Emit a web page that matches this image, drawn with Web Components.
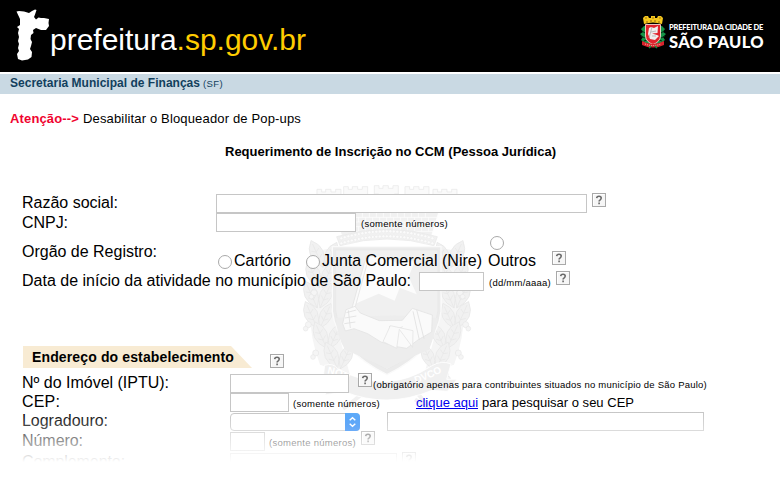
<!DOCTYPE html>
<html lang="pt-BR">
<head>
<meta charset="utf-8">
<title>Requerimento de Inscrição no CCM</title>
<style>
body{margin:0;background:#fff;font-family:"Liberation Sans",Arial,sans-serif;color:#000;width:780px;height:477px;overflow:hidden}
</style>
</head>
<body>
<ccm-page></ccm-page>
<script>
const def=(name,html,after)=>customElements.define(name,class extends HTMLElement{
  connectedCallback(){
    if(this.shadowRoot)return;
    this.attachShadow({mode:"open"}).innerHTML=html;
    if(after)after(this,this.shadowRoot);
  }
});
const place=el=>{
  el.style.marginLeft=(el.getAttribute("gap")||0)+"px";
  el.style.marginTop=(el.getAttribute("drop")||0)+"px";
};

/* One line of text; "w" is its set width, reached through letter-spacing. */
def("ui-text",`<style>:host{display:block;flex:none;white-space:pre;font-size:16px;line-height:20px}span{display:inline-block}</style><span><slot></slot></span>`,(el,root)=>{
  place(el);
  const size=el.getAttribute("size");
  if(size)el.style.fontSize=size+"px";
  const w=+el.getAttribute("w");
  if(w){
    const span=root.querySelector("span");
    const n=el.textContent.length;
    el.style.letterSpacing=((w-span.getBoundingClientRect().width)/n)+"px";
    el.style.width=w+"px";
  }
});
def("ui-field",`<style>:host{display:block;flex:none;box-sizing:border-box;height:19px;border:1px solid #c6c6c6;background:#fff}</style>`,el=>{
  place(el);el.style.width=el.getAttribute("w")+"px";
});
def("ui-radio",`<style>:host{display:block;flex:none;box-sizing:border-box;width:14px;height:14px;border:1px solid #a9a9a9;border-radius:50%;background:#fff}</style>`,place);
def("ui-help",`<style>:host{display:block;flex:none;width:14px;height:14px}svg{display:block}</style>
<svg width="14" height="14" viewBox="0 0 14 14"><rect x=".5" y=".5" width="13" height="13" fill="#f6f6f6" stroke="#a9a9a9"/><path d="M1.500 12.500V1.500H12.500" fill="none" stroke="#fff"/><path d="M4.700 5.100Q4.800 3.200 7 3.200Q9.200 3.200 9.200 5Q9.200 6.100 8.200 6.800Q7.100 7.500 7.100 8.600M7.100 9.600V11.300" fill="none" stroke="#6a6a6a" stroke-width="1.600"/></svg>`,place);
def("ui-select",`<style>:host{display:flex;flex:none;box-sizing:border-box;width:130px;height:18px;border:1px solid #c6c6c6;border-radius:4px;background:#fff;justify-content:flex-end}svg{display:block;margin:-1px}</style>
<svg width="15" height="18" viewBox="0 0 15 18"><defs><linearGradient id="b" x2="0" y2="1"><stop stop-color="#5aa9f9"/><stop offset="1" stop-color="#127af4"/></linearGradient></defs><path d="M0 0H11Q15 0 15 4V14Q15 18 11 18H0Z" fill="url(#b)"/><path d="M4.700 7.300L7.500 4.700L10.300 7.300M4.700 10.700L7.500 13.300L10.300 10.700" fill="none" stroke="#fff" stroke-width="1.400"/></svg>`,place);
def("form-row",`<style>:host{display:flex;align-items:flex-start;padding-left:22px;box-sizing:border-box}</style><slot></slot>`,el=>{el.style.height=el.getAttribute("h")+"px"});
def("section-tab",`<style>:host{display:block;flex:none;box-sizing:border-box;width:229px;height:22px;margin-left:1px;padding:1px 0 0 9px;background:#f8ebd3;clip-path:polygon(0 0,208px 0,100% 100%,0 100%);font-weight:700}</style><slot></slot>`);

/* City crest in full colour, for the black header. */
def("city-crest",`<style>:host{display:block;flex:none;width:26px;height:35px}svg{display:block}</style>
<svg width="26" height="35" viewBox="0 0 26 35">
<path d="M4 9L3 3L5 1H8L9 3H11V1H15V3H17L18 1H21L23 3L22 9Q13 6 4 9Z" fill="#f4c81e"/>
<path d="M5 3H7M12 3H14M19 3H21M7 6V8M11 5V7M15 5V7M19 6V8" stroke="#a77413" stroke-width="1.200"/>
<path d="M4 11L1 14L3 17L0 19L3 22L1 25L5 28L9 31L17 31L21 28L25 25L23 22L26 19L23 17L25 14L22 11Z" fill="#159447"/>
<path d="M2 16L5 18M1 21L5 23M24 16L21 18M25 21L21 23M4 26L7 25M22 26L19 25" stroke="#052c16"/>
<path d="M5.500 9.500H20.500V21Q20 27 13 29.500Q6 27 5.500 21Z" fill="#e0232d" stroke="#f9d8cf" stroke-width=".9"/>
<path d="M9 13L11 12L14 13L18 11L17.500 18L12 18.500L17 20L19 21L15 25L10 24L8 19Z" fill="#f0eeee"/>
<path d="M12 12L9 23M11 17L16 16M12 21L16 21" stroke="#a5a5a6" stroke-width=".7"/>
<path d="M2 26Q13 32 24 26L24 30Q13 35 2 30Z" fill="#d8232d"/><path d="M5 29Q13 32 21 29" fill="none" stroke="#f7c8b6" stroke-width="1" stroke-dasharray="1 1"/>
<path d="M9 33L11 31M17 33L15 31" stroke="#159447" stroke-width="1.500"/>
</svg>`);

def("site-header",`<style>
:host{display:flex;height:72px;background:#000;color:#fff;box-sizing:border-box;align-items:flex-start}
.map{display:block;margin:8px 0 0 15px;flex:none}
.gov{color:#fc0}
city-crest{margin:15px 0 0 auto}
.brand{display:flex;flex-direction:column;margin:23px 17px 0 3px;width:94px;font-family:Lato,"Open Sans",sans-serif;font-weight:900}
</style>
<svg class="map" width="35" height="54" viewBox="0 0 35 54"><path d="M1.500 3.500L4 3L9 3.500L14 5L17 3L20 1.500L21.500 2L20 6.500L19 9L21 11.500L23.500 9.500L26 10L29 10L34 11L33.500 15L34 18L31 22L26 22L21 20L18 22L18.500 25L16 27L15.500 31L17 34L16 38L15 41L17 44L16.500 49L13 51.500L7 52.500L3 51L2 46L4 43L3 40L4 36L3 33L4 29L3 25L4 21L2 19L5 17L5 11Z" fill="#fff"/></svg>
<ui-text drop="30" size="30" w="256">prefeitura<span class="gov">.sp.gov.br</span></ui-text>
<city-crest></city-crest>
<div class="brand"><ui-text size="7.500" w="94" style="line-height:10px">PREFEITURA DA CIDADE DE</ui-text><ui-text size="16.500" w="95" style="line-height:18px">SÃO PAULO</ui-text></div>`);

def("department-bar",`<style>:host{display:flex;height:20px;margin-top:2px;padding-left:10px;background:#c9d9e3;color:#123f5d}b{display:block}</style>
<b><ui-text size="12" w="190" drop="-1">Secretaria Municipal de Finanças</ui-text></b><ui-text size="9.500" w="20" gap="3">(SF)</ui-text>`);

/* Pale coat of arms behind the form; branches are laid out leaf by leaf. */
def("crest-watermark",`<style>:host{display:block;position:absolute;left:295px;top:178px;width:180px;height:236px;pointer-events:none}svg{display:block}</style>
<svg width="180" height="236" viewBox="0 0 540 708" fill="#f1f1f1" stroke="#fff" stroke-width="2.500">
<g id="battlements"></g>
<path d="M118 100L432 100L405 190Q276 150 145 190Z"/>
<g id="bricks" fill="none" stroke-width="2"></g>
<path d="M125 176Q276 132 427 176L417 203Q276 163 135 203Z" stroke="#ebebeb"/>
<g id="beads" fill="#fbfbfb" stroke="#e8e8e8" stroke-width="1.500"></g>
<g id="branches" stroke="#e7e7e7" stroke-width="2"></g>
<path d="M112 206H438V400Q426 515 276 590Q126 515 112 400Z" fill="#ebebeb" stroke="#fafafa" stroke-width="4"/>
<path d="M122 216H429V396Q418 505 276 574Q134 505 122 396Z" fill="#f0f0f0" stroke="#e8e8e8"/>
<path d="M209 242Q260 223 308 258L360 249L341 296L365 349L314 329L299 368L251 347L181 377L203 303Z" fill="#fcfcfc" stroke="none"/>
<path d="M214 233L222 236L151 495L143 492Z" fill="#fafafa" stroke="#e3e3e3"/>
<path d="M150 515Q200 535 276 572Q350 535 402 515Q420 470 429 420Q320 405 122 420Q128 480 150 515Z" fill="#ededed" stroke="none"/>
<path d="M153 395L180 385L196 405L253 428L322 427L352 391L412 411L410 462L370 485L335 511L305 506L258 492L218 467L177 452L151 459L143 437Z" fill="#fafafa" stroke="#e3e3e3"/>
<path d="M154 404L184 396M150 420L184 414M148 437L181 432M160 397L166 450M282 444Q295 463 323 446M354 400L373 486M365 395L387 482" fill="none" stroke="#e0e0e0"/>
<path d="M286 443L264 491L305 511L313 454L353 508L354 458Z" fill="#fafafa" stroke="#e5e5e5"/>
<path d="M175 672L144 692L179 666L215 637M370 649L405 693L360 664" stroke="#f1f1f1" stroke-width="12" fill="none"/>
<path d="M89 562Q113 553 130 573Q273 654 411 563Q440 546 468 558L455 604L486 604L457 640L411 637Q276 693 148 641L90 651L101 621L62 619L85 594Z" fill="#f0f0f0" stroke="#fff"/>
<path id="left" d="M96 586Q140 592 178 624" fill="none" stroke="none"/><path id="right" d="M362 616Q405 602 452 576" fill="none" stroke="none"/>
<g font-family="Liberation Sans,sans-serif" font-size="30" font-weight="700" fill="#fff" stroke="none"><text><textPath href="#left">NON</textPath></text><text><textPath href="#right">DVCO</textPath></text></g>
</svg>`,(el,root)=>{
  const fill=(id,s)=>{root.getElementById(id).innerHTML=s};
  let s="";
  [[66,42],[146,34],[238,31],[330,34],[414,42]].forEach(([x,y])=>{
    s+=`<path d="M${x} ${y}V${y-8}H${x+14}V${y}H${x+26}V${y-8}H${x+42}V${y}H${x+56}V${y-8}H${x+72}V${y+17}H${x+60}V100H${x+13}V${y+17}H${x}Z" stroke="#ebebeb" fill="#fafafa"/>`;
  });
  fill("battlements",s);
  s="";
  for(let r=0;r<4;r++){s+=`<path d="M${124+r*4} ${118+r*14}H${428-r*4}"/>`;for(let i=0;i<13;i++)s+=`<path d="M${139+i*21+(r%2)*10} ${104+r*14}v14"/>`}
  fill("bricks",s);
  s="";
  for(let i=0;i<27;i++){const x=139+i*10.5,d=(i-13)/13,y=160+d*d*21;s+=`<circle cx="${x}" cy="${y}" r="4.500"/><circle cx="${x}" cy="${y+15}" r="4.500"/>`}
  fill("beads",s);
  s="";
  const leaf=(x,y,a,w,h)=>`<g transform="translate(${x} ${y}) rotate(${a})"><path d="M0 0Q${-w} ${-h*.55} 0 ${-h}Q${w} ${-h*.55} 0 0Z" fill="#f1f1f1"/><path d="M0 0V${-h*.87}M0 ${-h*.32}l${-w*.32} -10M0 ${-h*.32}l${w*.32} -10M0 ${-h*.57}l${-w*.3} -8M0 ${-h*.57}l${w*.3} -8" fill="none"/></g>`;
  const half=dir=>{
    let t="";
    const X=v=>dir<0?v:552-v;
    t+=`<path d="M${X(85)} 215Q${X(10)} 390 ${X(75)} 560L${X(165)} 590L${X(112)} 400V210Z" fill="#f5f5f5" stroke="none"/>`;
    for(let i=0;i<6;i++){
      const x=84-Math.sin(i/5*Math.PI)*18+(i>3?(i-3)*22:0),y=268+i*61;
      t+=leaf(X(x),y,dir*24,40,88)+leaf(X(x+8),y,-dir*24,36,82);
    }
    [[57,344],[40,440],[62,525],[101,590]].forEach(([x,y])=>{t+=`<circle cx="${X(x)}" cy="${y}" r="9" fill="#f5f5f5"/><circle cx="${X(x-8)}" cy="${y+12}" r="7" fill="#f5f5f5"/>`});
    return t;
  };
  fill("branches",half(-1)+half(1));
});

def("registration-form",`<style>
:host{display:block}
a{color:#00e;text-decoration:underline}
.note{display:flex;height:36px;padding:15px 0 0 10px;box-sizing:border-box}
.note b{color:#f0032f}
.title{height:63px;padding:12px 0 0 225px;box-sizing:border-box;font-weight:700}
</style>
<div class="note"><b><ui-text size="13" w="69">Atenção--&gt;</ui-text></b><ui-text size="13" w="218" gap="4">Desabilitar o Bloqueador de Pop-ups</ui-text></div>
<div class="title"><ui-text size="13" w="331">Requerimento de Inscrição no CCM (Pessoa Jurídica)</ui-text></div>
<form-row h="20"><ui-text w="96">Razão social:</ui-text><ui-field gap="98" drop="1" w="371"></ui-field><ui-help gap="5"></ui-help></form-row>
<form-row h="19"><ui-text w="46">CNPJ:</ui-text><ui-field gap="148" w="140"></ui-field><ui-text gap="5" drop="1" size="9.500" w="87">(somente números)</ui-text></form-row>
<form-row h="39"><ui-text drop="10" w="135">Orgão de Registro:</ui-text><ui-radio gap="61" drop="23"></ui-radio><ui-text gap="2" drop="19" w="57">Cartório</ui-text><ui-radio gap="15" drop="23"></ui-radio><ui-text gap="2" drop="19" w="160">Junta Comercial (Nire)</ui-text><ui-text gap="6" drop="19" w="48">Outros</ui-text><ui-radio gap="-46" drop="4"></ui-radio><ui-help gap="48" drop="19"></ui-help></form-row>
<form-row h="75"><ui-text w="389">Data de início da atividade no município de São Paulo:</ui-text><ui-field gap="8" drop="1" w="65"></ui-field><ui-text gap="5" drop="2" size="9.500" w="62">(dd/mm/aaaa)</ui-text><ui-help gap="5"></ui-help></form-row>
<form-row h="27"><section-tab><ui-text size="14" w="202">Endereço do estabelecimento</ui-text></section-tab><ui-help gap="18" drop="8"></ui-help></form-row>
<form-row h="20"><ui-text w="147">Nº do Imóvel (IPTU):</ui-text><ui-field gap="61" drop="1" w="119"></ui-field><ui-help gap="9"></ui-help><ui-text gap="1" drop="2" size="9.500" w="334">(obrigatório apenas para contribuintes situados no município de São Paulo)</ui-text></form-row>
<form-row h="19"><ui-text drop="-1" w="38">CEP:</ui-text><ui-field gap="170" w="59"></ui-field><ui-text gap="4" drop="1" size="9.500" w="87">(somente números)</ui-text><ui-text gap="36" drop="0" size="13" w="62"><a>clique aqui</a></ui-text><ui-text gap="4" size="13" w="152">para pesquisar o seu CEP</ui-text></form-row>
<form-row h="20"><ui-text drop="-1" w="86">Logradouro:</ui-text><ui-select gap="122" drop="1"></ui-select><ui-field gap="27" w="317"></ui-field></form-row>
<form-row h="20"><ui-text drop="-1" w="61">Número:</ui-text><ui-field gap="147" w="35"></ui-field><ui-text gap="4" drop="1" size="9.500" w="87">(somente números)</ui-text><ui-help gap="5" drop="-1"></ui-help></form-row>
<form-row h="20"><ui-text w="103">Complemento:</ui-text><ui-field gap="105" drop="1" w="167"></ui-field><ui-help gap="5"></ui-help></form-row>
`);

def("ccm-page",`<style>
:host{display:block;position:relative;width:780px;height:477px;overflow:hidden}
registration-form{position:relative}
.fade{position:absolute;left:0;right:0;top:412px;bottom:0;background:linear-gradient(rgba(255,255,255,0),#fff 50px)}
</style>
<site-header></site-header>
<department-bar></department-bar>
<crest-watermark></crest-watermark>
<registration-form></registration-form>
<div class="fade"></div>`);
</script>
</body>
</html>
